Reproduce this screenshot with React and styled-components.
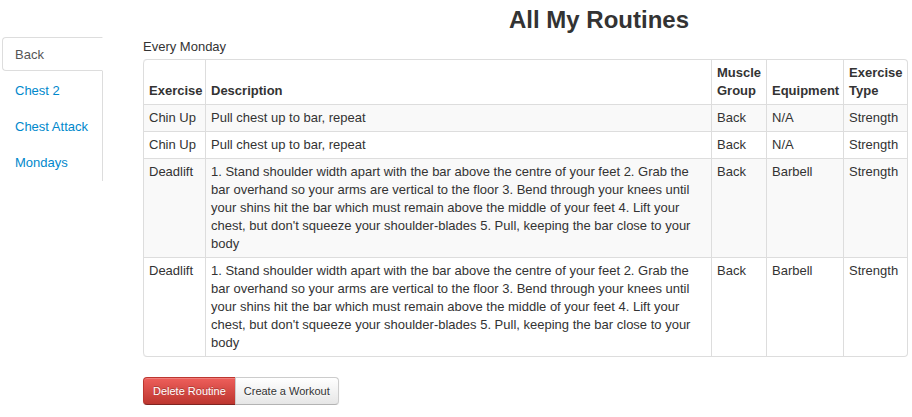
import React from "react";
import styled, { createGlobalStyle } from "styled-components";

const GlobalStyle = createGlobalStyle`
  body {
    margin: 0;
    background: #fff;
    color: #333;
    font-family: "Liberation Sans", Arial, sans-serif;
    font-size: 13px;
    line-height: 18px;
  }
`;

const Page = styled.div`
  width: 912px;
`;

const Title = styled.h2`
  margin: 0 0 0 286px;
  padding-top: 5px;
  height: 32px;
  font-size: 24px;
  line-height: 30px;
  font-weight: bold;
  text-align: center;
  color: #333;
`;

const Body = styled.div`
  display: flex;
  align-items: flex-start;
  gap: 40px;
  padding-left: 2px;
`;

const Tabs = styled.ul`
  list-style: none;
  margin: 0;
  padding: 0;
  width: 100px;
  border-right: 1px solid #ddd;
`;

const TabItem = styled.li`
  margin-bottom: 2px;
`;

const TabLink = styled.a`
  display: block;
  margin-right: -1px;
  padding: 8px 12px 6px;
  line-height: 18px;
  border: 1px solid ${(p) => (p.$active ? "#ddd" : "transparent")};
  border-right-color: ${(p) => (p.$active ? "#fff" : "transparent")};
  border-radius: 4px 0 0 4px;
  background: ${(p) => (p.$active ? "#fff" : "transparent")};
  color: ${(p) => (p.$active ? "#555" : "#0088cc")};
  text-decoration: none;
  cursor: pointer;
`;

const Content = styled.div`
  width: 764px;
`;

const Caption = styled.div`
  padding-top: 1px;
  height: 17px;
  margin-bottom: 4px;
`;

const Table = styled.table`
  width: 100%;
  table-layout: fixed;
  border-collapse: separate;
  border-spacing: 0;
  border: 1px solid #ddd;
  border-left: 0;
  border-radius: 4px;
  margin-bottom: 20px;

  th,
  td {
    box-sizing: border-box;
    padding: 4px 5px;
    line-height: 18px;
    text-align: left;
    border-left: 1px solid #ddd;
    border-top: 1px solid #ddd;
  }

  thead th {
    border-top: 0;
    vertical-align: bottom;
    font-weight: bold;
  }

  thead th:first-child {
    border-top-left-radius: 4px;
  }

  thead th:last-child {
    border-top-right-radius: 4px;
  }

  tbody td {
    vertical-align: top;
  }

  tbody tr:nth-child(odd) td {
    background: #f9f9f9;
  }

  tbody tr:last-child td:first-child {
    border-bottom-left-radius: 4px;
  }

  tbody tr:last-child td:last-child {
    border-bottom-right-radius: 4px;
  }
`;

const HeadCell = styled.th`
  width: ${(p) => p.$w}px;
`;

const ButtonGroup = styled.div`
  display: flex;
`;

const Button = styled.button`
  font-family: "Liberation Sans", Arial, sans-serif;
  font-size: 11px;
  line-height: 16px;
  padding: 5px ${(p) => (p.$first ? "9px" : "8px")};
  margin: 0;
  cursor: pointer;
  border: 1px solid;
  border-radius: ${(p) => (p.$first ? "4px 0 0 4px" : "0 4px 4px 0")};
  margin-left: ${(p) => (p.$first ? "0" : "-1px")};
  ${(p) =>
    p.$danger
      ? `
    color: #fff;
    text-shadow: 0 -1px 0 rgba(0,0,0,0.25);
    background: linear-gradient(to bottom, #ee5f5b, #bd362f);
    border-color: #bd362f #bd362f #802420;
  `
      : `
    color: #333;
    text-shadow: 0 1px 1px rgba(255,255,255,0.75);
    background: linear-gradient(to bottom, #ffffff, #e6e6e6);
    border-color: #ccc #ccc #b3b3b3;
  `}
  box-shadow: inset 0 1px 0 rgba(255, 255, 255, 0.2), 0 1px 2px rgba(0, 0, 0, 0.05);
`;

const deadlift =
  "1. Stand shoulder width apart with the bar above the centre of your feet 2. Grab the bar overhand so your arms are vertical to the floor 3. Bend through your knees until your shins hit the bar which must remain above the middle of your feet 4. Lift your chest, but don't squeeze your shoulder-blades 5. Pull, keeping the bar close to your body";

const rows = [
  { ex: "Chin Up", desc: "Pull chest up to bar, repeat", group: "Back", eq: "N/A", type: "Strength" },
  { ex: "Chin Up", desc: "Pull chest up to bar, repeat", group: "Back", eq: "N/A", type: "Strength" },
  { ex: "Deadlift", desc: deadlift, group: "Back", eq: "Barbell", type: "Strength" },
  { ex: "Deadlift", desc: deadlift, group: "Back", eq: "Barbell", type: "Strength" },
];

const tabs = ["Back", "Chest 2", "Chest Attack", "Mondays"];

const App = () => {
  return (
    <Page>
      <GlobalStyle />
      <Title>All My Routines</Title>
      <Body>
        <Tabs>
          {tabs.map((t, i) => (
            <TabItem key={t}>
              <TabLink $active={i === 0}>{t}</TabLink>
            </TabItem>
          ))}
        </Tabs>
        <Content>
          <Caption>Every Monday</Caption>
          <Table>
            <thead>
              <tr>
                <HeadCell $w={62}>Exercise</HeadCell>
                <HeadCell $w={506}>Description</HeadCell>
                <HeadCell $w={55}>Muscle Group</HeadCell>
                <HeadCell $w={77}>Equipment</HeadCell>
                <HeadCell $w={64}>Exercise Type</HeadCell>
              </tr>
            </thead>
            <tbody>
              {rows.map((r, i) => (
                <tr key={i}>
                  <td>{r.ex}</td>
                  <td>{r.desc}</td>
                  <td>{r.group}</td>
                  <td>{r.eq}</td>
                  <td>{r.type}</td>
                </tr>
              ))}
            </tbody>
          </Table>
          <ButtonGroup>
            <Button $first $danger>Delete Routine</Button>
            <Button>Create a Workout</Button>
          </ButtonGroup>
        </Content>
      </Body>
    </Page>
  );
};

export default App;
